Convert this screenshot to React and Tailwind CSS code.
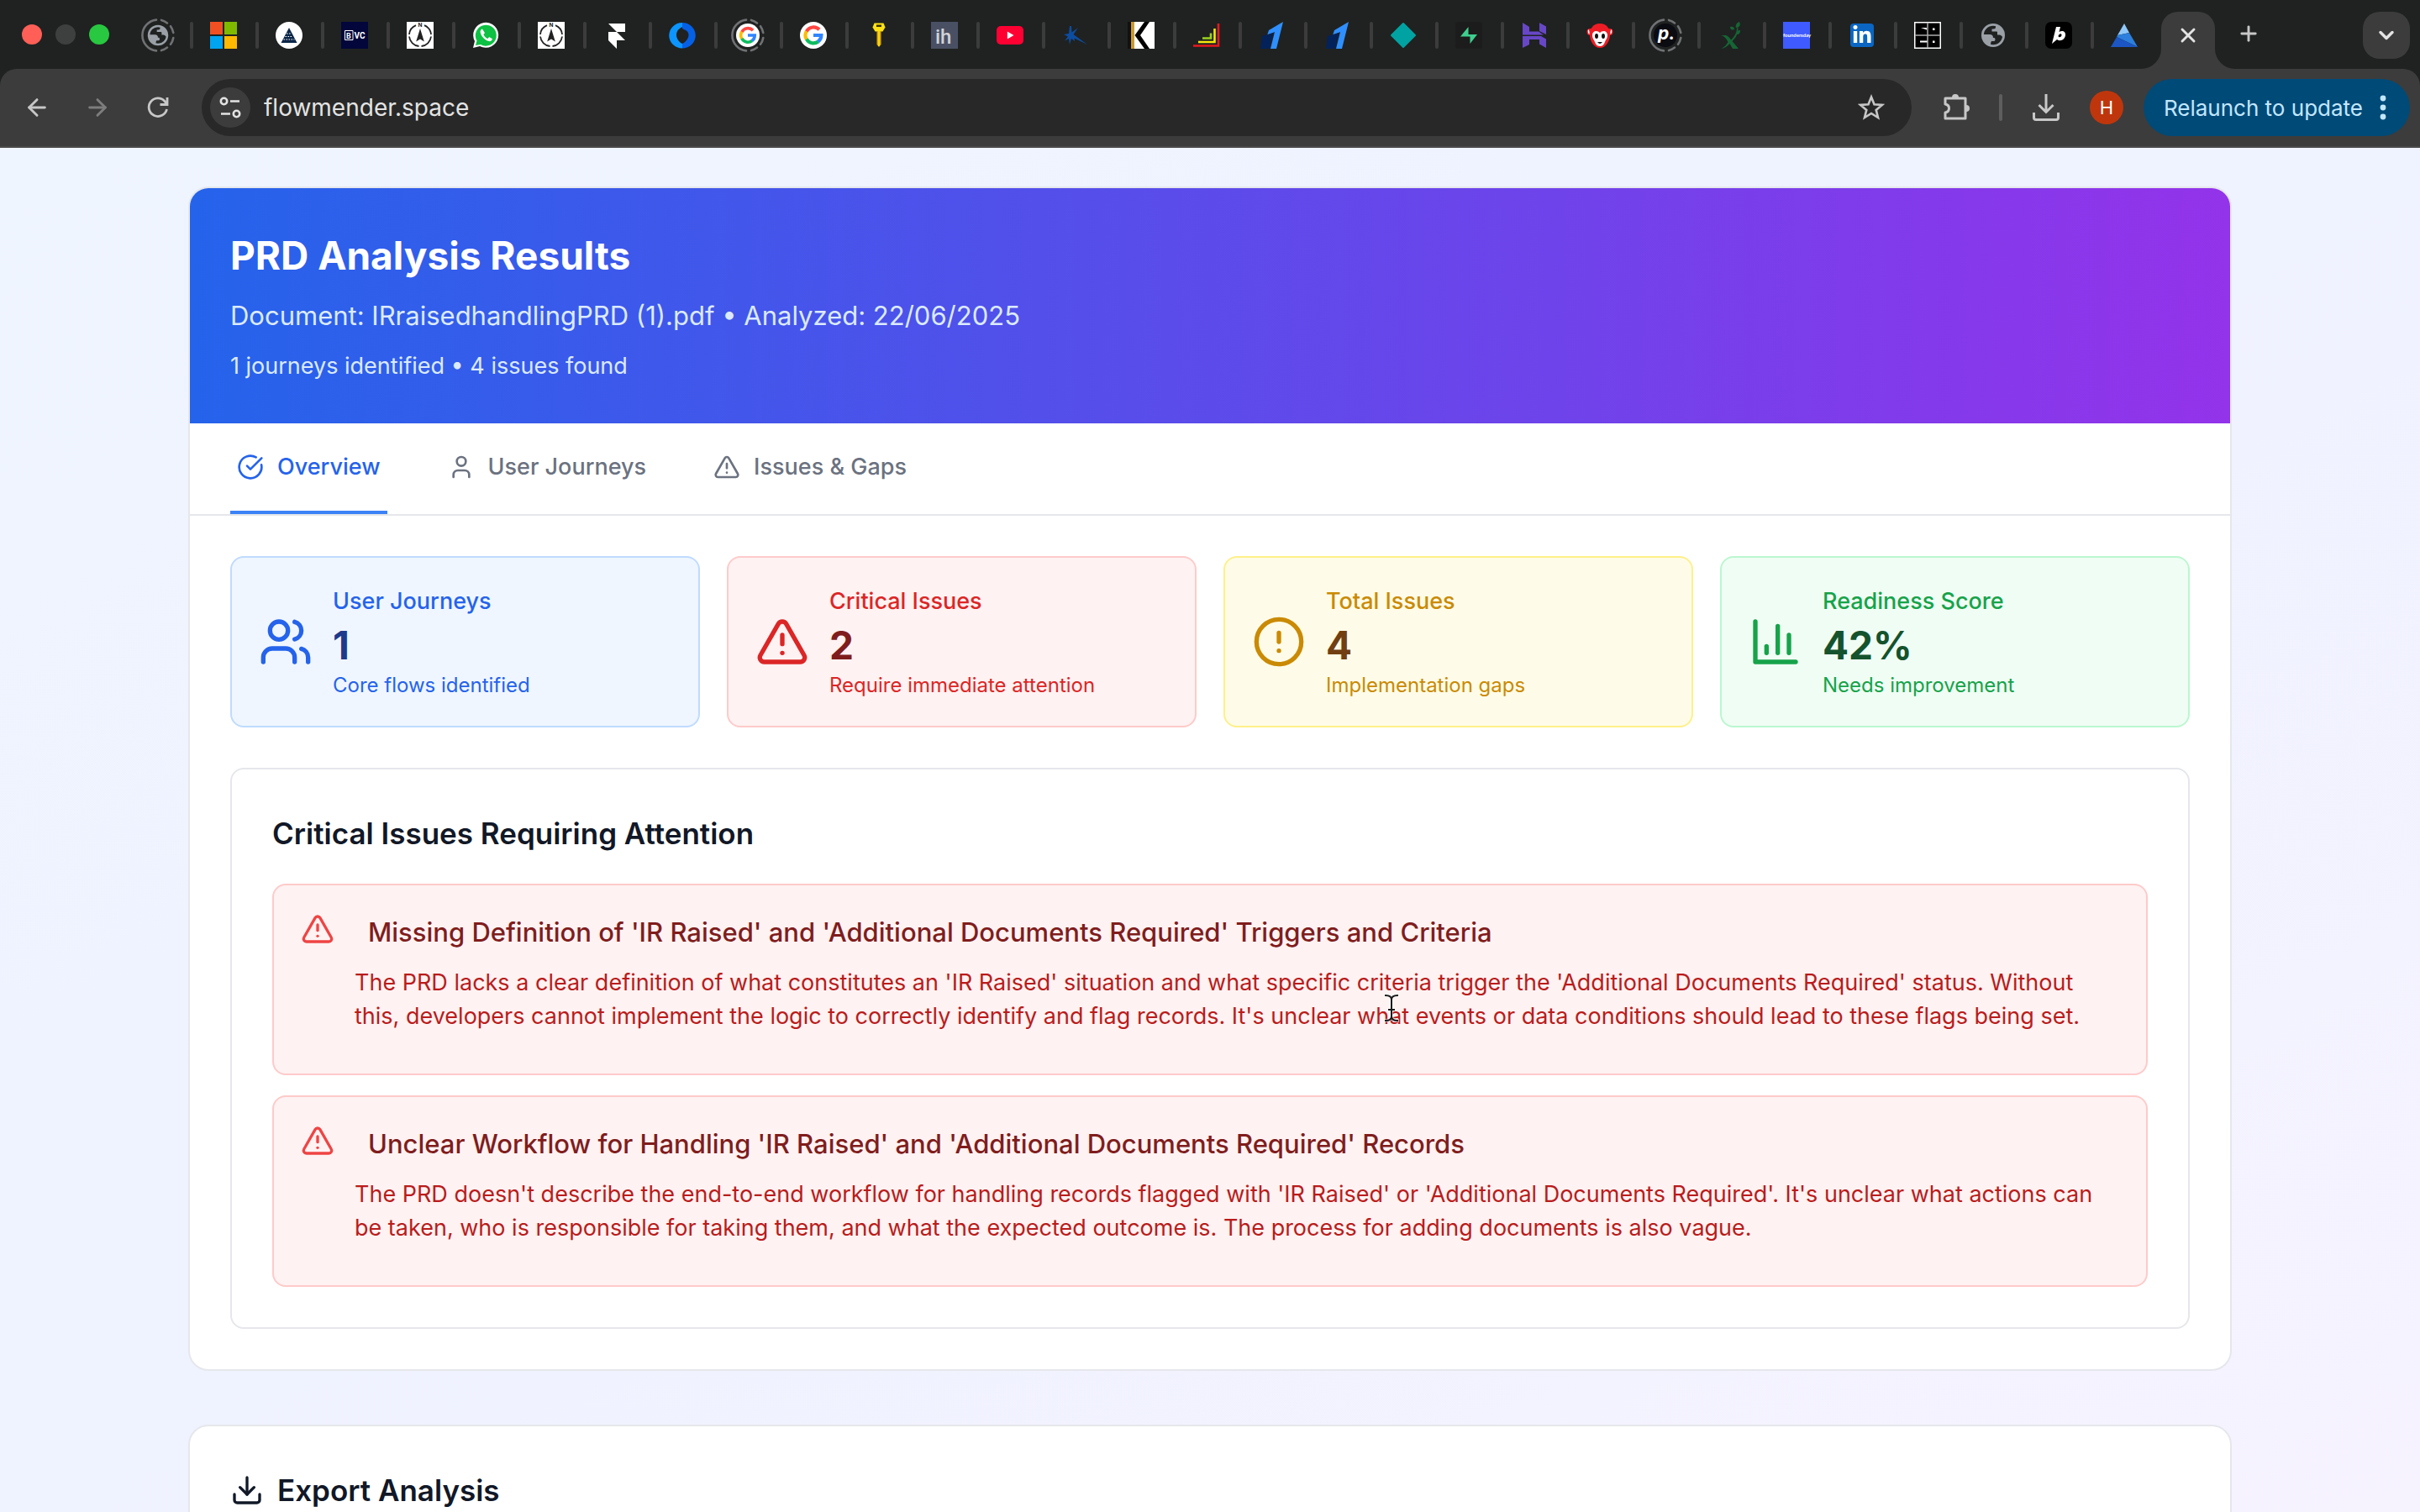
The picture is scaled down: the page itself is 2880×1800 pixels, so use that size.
import React from 'react';
import { FaLinkedinIn } from 'react-icons/fa6';
import {
  TriangleAlert,
  ArrowLeft,
  ArrowRight,
  ChevronDown,
  CircleAlert,
  CircleCheckBig,
  Download,
  Plus,
  User,
  Users,
  X,
} from 'lucide-react';

const TABS = [
  { id: 'overview', label: 'Overview', icon: CircleCheckBig },
  { id: 'journeys', label: 'User Journeys', icon: User },
  { id: 'issues', label: 'Issues & Gaps', icon: TriangleAlert },
];

const STATS = [
  {
    label: 'User Journeys',
    value: '1',
    note: 'Core flows identified',
    icon: Users,
    box: 'bg-[#eff6ff] border-[#bfdbfe]',
    text: 'text-[#2563eb]',
    number: 'text-[#1e3a8a]',
  },
  {
    label: 'Critical Issues',
    value: '2',
    note: 'Require immediate attention',
    icon: TriangleAlert,
    box: 'bg-[#fef2f2] border-[#fecaca]',
    text: 'text-[#dc2626]',
    number: 'text-[#7f1d1d]',
  },
  {
    label: 'Total Issues',
    value: '4',
    note: 'Implementation gaps',
    icon: CircleAlert,
    box: 'bg-[#fefce8] border-[#fef08a]',
    text: 'text-[#ca8a04]',
    number: 'text-[#713f12]',
  },
  {
    label: 'Readiness Score',
    value: '42%',
    note: 'Needs improvement',
    icon: BarChart,
    box: 'bg-[#f0fdf4] border-[#bbf7d0]',
    text: 'text-[#16a34a]',
    number: 'text-[#14532d]',
  },
];

const ISSUES = [
  {
    title: "Missing Definition of 'IR Raised' and 'Additional Documents Required' Triggers and Criteria",
    body: "The PRD lacks a clear definition of what constitutes an 'IR Raised' situation and what specific criteria trigger the 'Additional Documents Required' status. Without this, developers cannot implement the logic to correctly identify and flag records. It's unclear what events or data conditions should lead to these flags being set.",
  },
  {
    title: "Unclear Workflow for Handling 'IR Raised' and 'Additional Documents Required' Records",
    body: "The PRD doesn't describe the end-to-end workflow for handling records flagged with 'IR Raised' or 'Additional Documents Required'. It's unclear what actions can be taken, who is responsible for taking them, and what the expected outcome is. The process for adding documents is also vague.",
  },
];

function BarChart({ className }) {
  return (
    <svg viewBox="0 0 24 24" fill="none" stroke="currentColor" strokeWidth="2" strokeLinecap="round" strokeLinejoin="round" className={className}>
      <path d="M3 3v18h18" />
      <path d="M18 17V9" />
      <path d="M13 17V5" />
      <path d="M8 17v-3" />
    </svg>
  );
}

/* ---------- favicons, all drawn on a 32 grid ---------- */

function Fav({ children }) {
  return <svg viewBox="0 0 32 32" className="size-8 shrink-0 overflow-visible">{children}</svg>;
}

// broken ring shown around sleeping tabs
function Ring() {
  return (
    <g fill="none" stroke="#6f7173" strokeWidth="2.6" strokeLinecap="round">
      <path d="M14 -2.4 A18.5 18.5 0 0 0 14 34.4" />
      <path d="M20 -2.1 A18.5 18.5 0 0 1 27 1.4" />
      <path d="M31 5.2 A18.5 18.5 0 0 1 34.3 13" />
      <path d="M34.3 19 A18.5 18.5 0 0 1 31 26.8" />
      <path d="M27 30.6 A18.5 18.5 0 0 1 20 34.1" />
    </g>
  );
}

function GlobeShape() {
  return (
    <>
      <circle cx="16" cy="16" r="12.6" fill="#1f2221" stroke="#9aa0a6" strokeWidth="2.8" />
      <path d="M3 15h9q4 0 4 4h1.500q2 2 0 4h-3.500q-1 1-1 5Q5 26 3 17z" fill="#9aa0a6" />
      <path d="M19 3.500v2.500q0 2.500-2.500 2.500h-2v3h5.500q1 0 1 1v3h2.500q2 0 3 2l2.500-1Q29 7 19 3.500z" fill="#9aa0a6" />
    </>
  );
}

function Globe() {
  return <Fav><GlobeShape /></Fav>;
}

function GlobeRing() {
  return (
    <Fav>
      <Ring />
      <g transform="translate(2 2) scale(0.875)"><GlobeShape /></g>
    </Fav>
  );
}

function Microsoft() {
  return (
    <Fav>
      <path fill="#f25022" d="M0 0h15v15H0z" />
      <path fill="#7fba00" d="M17 0h15v15H17z" />
      <path fill="#00a4ef" d="M0 17h15v15H0z" />
      <path fill="#ffb900" d="M17 17h15v15H17z" />
    </Fav>
  );
}

function Pyramid() {
  return (
    <Fav>
      <circle cx="16" cy="16" r="16" fill="#fff" />
      <path d="M16 7l9.500 18h-19z" fill="#0b2547" />
      <path d="M13 14h6M11.500 17.500h9M9.500 21h13" stroke="#fff" strokeWidth="1.200" strokeDasharray="1.600 1.400" />
    </Fav>
  );
}

function Bvc() {
  return (
    <Fav>
      <path fill="#02063a" d="M0 0h32v32H0z" />
      <path d="M4.500 10.500h9.500v11H4.500z" fill="none" stroke="#fff" strokeWidth="1" />
      <text x="6" y="19.500" fontSize="9" fontWeight="700" fontFamily="Roboto, sans-serif" fill="#fff">B</text>
      <text x="15.500" y="19.500" fontSize="10" fontWeight="700" fontFamily="Roboto, sans-serif" fill="#fff">VC</text>
    </Fav>
  );
}

function Compass() {
  return (
    <Fav>
      <path fill="#fff" d="M0 0h32v32H0z" />
      <g fill="none" stroke="#222" strokeWidth="1.800">
        <path d="M11 4.200A13 13 0 0 0 3 15" />
        <path d="M21 4.200A13 13 0 0 1 29 15" />
        <path d="M3 17.500A13 13 0 0 0 14.500 29" />
        <path d="M29 17.500A13 13 0 0 1 17.500 29" />
      </g>
      <path d="M16 8l4.800 15.500L16 20.500l-4.800 3z" fill="#222" />
      <text x="13.500" y="6" fontSize="6.500" fontWeight="700" fontFamily="Inter, sans-serif" fill="#222">N</text>
    </Fav>
  );
}

function WhatsApp() {
  return (
    <Fav>
      <path d="M1 31l2-8A15 15 0 1 1 9 29z" fill="#fff" />
      <path d="M4 28l1.500-5.500A12.500 12.500 0 1 1 10 27z" fill="#0dc143" />
      <path d="M12 8.500c-1.500.3-2.800 2-2.300 4.300 1 4.700 5.500 9.300 10 10.300 2.500.4 4-1 4.200-2.800l-3.700-2.200-1.700 1.800c-2.400-.9-4.300-2.900-5.100-5l1.600-1.700z" fill="#fff" />
    </Fav>
  );
}

function Framer() {
  return <Fav><path d="M6 2h20v10H16zM6 12h10l10 10H16v10L6 22z" fill="#fff" /></Fav>;
}

function BlueRing() {
  return (
    <Fav>
      <path d="M16 1A15.500 15 0 0 0 16 31.500V26c-4-2-7-6-7-10.500S12 8 16 6z" fill="#0c95ff" />
      <path d="M16 1A15.500 15 0 0 1 16 31.500V26c4-2 7.500-6 7.500-10.500S20 10 16 8z" fill="#0560e6" />
    </Fav>
  );
}

function GoogleMark() {
  return (
    <>
      <circle cx="16" cy="16" r="16" fill="#fff" />
      <g fill="none" strokeWidth="4.200">
        <path d="M23 9.300A9.500 9.500 0 0 0 7.800 11.500" stroke="#ff4641" />
        <path d="M7.800 11.200A9.500 9.500 0 0 0 7.800 20.800" stroke="#fcbd00" />
        <path d="M7.800 20.500A9.500 9.500 0 0 0 21.800 23.500" stroke="#0ebc5f" />
        <path d="M16 16h9.400A9.500 9.500 0 0 1 21.600 23.600" stroke="#3186ff" />
      </g>
    </>
  );
}

function Google() {
  return <Fav><GoogleMark /></Fav>;
}

function GoogleRing() {
  return (
    <Fav>
      <Ring />
      <g transform="translate(2 2) scale(0.875)"><GoogleMark /></g>
    </Fav>
  );
}

function Key() {
  return (
    <Fav>
      <path d="M10.500 1.500h11l2 5-3 5H11.500l-3-5z" fill="#fce116" />
      <path d="M13.500 11h5v16L16 30l-2.500-3z" fill="#e0a800" />
      <path d="M16 11v18" stroke="#fce116" strokeWidth="1.600" />
      <path d="M13 3.500h6v2.500h-6z" fill="#3a3205" />
    </Fav>
  );
}

function IndieHackers() {
  return (
    <Fav>
      <path fill="#4a5064" d="M0 0h32v32H0z" />
      <text x="5" y="26" fontSize="24" fontFamily="Roboto, sans-serif" fontWeight="500" fill="#d0d3d6">ih</text>
    </Fav>
  );
}

function YouTube() {
  return (
    <Fav>
      <rect x="0" y="5" width="32" height="22" rx="5" fill="#ff0033" />
      <path d="M12.800 11.500L20.500 16l-7.700 4.500z" fill="#fff" />
    </Fav>
  );
}

function StarK() {
  return (
    <Fav>
      <path d="M9 5h2l.5 7.500L19 7l-5.500 8L30 27l-15.500-7.500L15 23l-4-3L9 27 8 20l-5 2.500 4-5L2 15l6-1z" fill="#0d4da1" />
    </Fav>
  );
}

function BlackK() {
  return (
    <Fav>
      <path fill="#fff" d="M0 0h32v32H0z" />
      <path d="M0 0h4v32H0z" fill="#111" />
      <path d="M4 0h4v32H4z" fill="#c99a2e" />
      <path d="M20 0h6l-11 16 11 16h-6L8.500 16z" fill="#000" />
    </Fav>
  );
}

function Stairs() {
  return (
    <Fav>
      <g fill="none" strokeWidth="2.600">
        <path d="M0 28.500h30V2" stroke="#e8191c" />
        <path d="M6 24h19.500V8" stroke="#f6e80c" />
        <path d="M11 19.500h10v-6" stroke="#9bd21c" />
      </g>
    </Fav>
  );
}

function BlueOne() {
  return (
    <Fav>
      <path d="M29 0L21 32H14L19 12l-9 4 2-6z" fill="#2f8fff" />
      <path d="M4 17l13-4-4 19H2z" fill="#04225a" />
    </Fav>
  );
}

function Diamond() {
  return <Fav><path d="M16 2l14 14-14 14L2 16z" fill="#00a3a1" stroke="#00a3a1" strokeWidth="2" strokeLinejoin="round" /></Fav>;
}

function Supabase() {
  return (
    <Fav>
      <rect width="32" height="32" rx="4" fill="#1c1c1c" />
      <path d="M15.500 6v9H26L17.500 26v-8.500H6z" fill="#3ecf8e" />
    </Fav>
  );
}

function Hostinger() {
  return (
    <Fav>
      <path d="M2 1l8 5v5.500h11l6 4H2zM22 1l8 4.500v9.500l-8-4zM2 31V17h22l6 3.500V31l-8-4.500V21H10v6z" fill="#6747c7" />
    </Fav>
  );
}

function Monkey() {
  return (
    <Fav>
      <circle cx="4.500" cy="12" r="4" fill="#ee1d25" />
      <circle cx="27.500" cy="12" r="4" fill="#ee1d25" />
      <path d="M16 2c8 0 12 6 12 13 0 8-5 16-12 16S4 23 4 15C4 8 8 2 16 2z" fill="#ee1d25" />
      <path d="M16 13c3-3.500 9-2.500 9 3 0 4-2 5-3 8s-3 5-6 5-5-2-6-5-3-4-3-8c0-5.500 6-6.500 9-3z" fill="#fff" />
      <path d="M2 9q2 1 1.500 6Q1 13 2 9zM30 9q-2 1-1.500 6 2.500-2 1.500-6z" fill="#fff" />
      <ellipse cx="12" cy="17" rx="2" ry="3" fill="#111" />
      <ellipse cx="20" cy="17" rx="2" ry="3" fill="#111" />
      <path d="M13 24q3 4 6 0z" fill="#111" />
    </Fav>
  );
}

function PDot() {
  return (
    <Fav>
      <Ring />
      <circle cx="16" cy="16" r="14" fill="#0b0b12" />
      <text x="7" y="21" fontSize="21" fontWeight="700" fontStyle="italic" fontFamily="Inter, sans-serif" fill="#fff">p.</text>
    </Fav>
  );
}

function Plant() {
  return (
    <Fav>
      <path d="M4 16h6c3 1 4.500 3 6 5.500 5-5 7-9 7-14.500l1.500.5c0 7-3 12-7 15.500l7.500 9h-7l-3.500-6c-3 3-6 5.500-10 6 4-2 6-5 8-8-2-4-4-7-8.500-8z" fill="#166534" />
      <path d="M26 0c2 4 0 7-4 7-1-3 1-6 4-7zM15 6c3-1 5 0 5 3-3 1-5 0-5-3zM27 10c0 3-1 5-4 5 0-3 1-5 4-5z" fill="#166534" />
    </Fav>
  );
}

function Foundersday() {
  return (
    <Fav>
      <path fill="#3f5bff" d="M0 0h32v32H0z" />
      <text x="0" y="18" fontSize="6" fontWeight="700" fontFamily="Lato, sans-serif" fill="#fff">foundersday</text>
    </Fav>
  );
}

function LinkedIn() {
  return (
    <span className="flex size-8 shrink-0 items-center justify-center">
      <span className="flex size-7 items-center justify-center rounded-sm bg-[#0a66c2]">
        <FaLinkedinIn className="size-6 text-white" />
      </span>
    </span>
  );
}

function GridBox() {
  return (
    <Fav>
      <path d="M.75.75h30.500v30.500H.75z" fill="#000" stroke="#fff" strokeWidth="1.500" />
      <path d="M16 1v30M1 16h30" stroke="#aaa" strokeWidth="1.500" />
      <path d="M8 7h7v2.500zM22 7.500h2.500V10H22zM7 22.500h8.500V24.500H7zM22 22.500h2.500v2.500H22z" fill="#fff" />
    </Fav>
  );
}

function BoldB() {
  return (
    <Fav>
      <rect width="32" height="32" rx="7" fill="#000" />
      <path d="M13 6h5l-1.500 6c4-2.500 8-.5 7.500 4-.5 5-6 8-10 5l-6 5z M15.500 17c.5 2 3.500 1.500 4-1 .3-2.500-3-2.500-4 1z" fill="#fff" fillRule="evenodd" />
    </Fav>
  );
}

function Peak() {
  return (
    <Fav>
      <path d="M16 2L8 16l14-3z" fill="#8fc8fb" />
      <path d="M22 13L8 16l-1 2 25 12z" fill="#2c7fdc" />
      <path d="M7 18L0 30h32z" fill="#1b56c4" />
    </Fav>
  );
}

const FAVICONS = [
  GlobeRing, Microsoft, Pyramid, Bvc, Compass, WhatsApp, Compass, Framer, BlueRing, GoogleRing,
  Google, Key, IndieHackers, YouTube, StarK, BlackK, Stairs, BlueOne, BlueOne, Diamond,
  Supabase, Hostinger, Monkey, PDot, Plant, Foundersday, LinkedIn, GridBox, Globe, BoldB, Peak,
];

function TabStrip() {
  return (
    <div className="flex h-[82px] items-end bg-[#1f2221]">
      <div className="flex h-full w-[152px] shrink-0 items-center gap-4 pl-[26px]">
        <button aria-label="Close window" className="size-6 rounded-full bg-[#ff5f57]" />
        <button aria-label="Minimize window" className="size-6 rounded-full bg-[#3d403f]" />
        <button aria-label="Zoom window" className="size-6 rounded-full bg-[#28c840]" />
      </div>
      {FAVICONS.map((Icon, i) => (
        <div key={i} className="flex h-full shrink-0 items-center pt-0.5 pl-5">
          <Icon />
          {i < FAVICONS.length - 1 && <span className="ml-[22px] h-8 w-1 rounded-full bg-[#3c3c3c]" />}
        </div>
      ))}
      <div className="relative ml-7 flex h-[68px] w-16 shrink-0 items-center justify-center rounded-t-[20px] bg-[#3c3c3c] pb-3">
        <svg viewBox="0 0 24 24" className="absolute bottom-0 -left-6 size-6" fill="#3c3c3c"><path d="M24 0v24H0A24 24 0 0 0 24 0z" /></svg>
        <svg viewBox="0 0 24 24" className="absolute right-[-24px] bottom-0 size-6" fill="#3c3c3c"><path d="M0 0v24h24A24 24 0 0 1 0 0z" /></svg>
        <button aria-label="Close tab"><X className="size-7 text-[#e3e3e3]" strokeWidth={2.5} /></button>
      </div>
      <button aria-label="New tab" className="mb-7 ml-[26px]"><Plus className="size-7 text-[#c7c7c7]" strokeWidth={2.5} /></button>
      <button aria-label="Search tabs" className="mr-3 mb-3 ml-auto flex size-14 items-center justify-center rounded-[20px] bg-[#3c3c3c]">
        <ChevronDown className="size-7 text-[#e3e3e3]" strokeWidth={3} />
      </button>
    </div>
  );
}

function Toolbar() {
  return (
    <div className="bg-[#1f2221]">
      <div className="flex h-[94px] items-center rounded-t-[20px] border-b-2 border-[#4a4a4a] bg-[#3c3c3c] pr-3 pl-7">
        <button aria-label="Back"><ArrowLeft className="size-8 text-[#c7c7c7]" strokeWidth={2.2} /></button>
        <button aria-label="Forward" className="ml-10"><ArrowRight className="size-8 text-[#7d7d7d]" strokeWidth={2.2} /></button>
        <button aria-label="Reload" className="ml-10">
          <svg viewBox="0 0 32 32" className="size-8" fill="none" stroke="#c7c7c7" strokeWidth="2.800">
            <path d="M26.500 18A10.800 10.800 0 1 1 24 8.500l2.500 3" />
            <path d="M27 4v8.500h-8.500" />
          </svg>
        </button>
        <div className="ml-9 flex h-[68px] flex-1 items-center rounded-full bg-[#282828] pr-8 pl-[10px]">
          <button aria-label="Site information" className="flex size-12 items-center justify-center rounded-full bg-[#3c3c3c]">
            <svg viewBox="0 0 28 28" className="size-7" fill="none" stroke="#e3e3e3" strokeWidth="2.600">
              <circle cx="6.500" cy="6.500" r="3.700" />
              <path d="M14 6.500h11M3 21.500h11" />
              <circle cx="21.500" cy="21.500" r="3.700" />
            </svg>
          </button>
          <input
            type="text"
            aria-label="Address"
            defaultValue="flowmender.space"
            className="ml-4 min-w-0 flex-1 bg-transparent text-[28px] leading-10 text-[#e3e3e3] outline-none"
          />
          <button aria-label="Bookmark">
            <svg viewBox="0 0 32 32" className="size-8" fill="none" stroke="#c7c7c7" strokeWidth="2.600">
              <path d="M16 3.500l3.500 8.700 9.400.7-7.200 6 2.300 9.100-8-5-8 5 2.300-9.100-7.200-6 9.400-.7z" />
            </svg>
          </button>
        </div>
        <button aria-label="Extensions" className="ml-9">
          <svg viewBox="0 0 36 36" className="size-9" fill="none" stroke="#c7c7c7" strokeWidth="3" strokeLinejoin="round">
            <path d="M4 7h24v24H4v-7c6-1 6-9 0-10z" />
            <path d="M12 6a4 4 0 0 1 8 0zM29 15a4 4 0 0 1 0 8z" fill="#c7c7c7" stroke="none" />
          </svg>
        </button>
        <span className="ml-8 h-8 w-1 rounded-full bg-[#5e5e5e]" />
        <button aria-label="Downloads" className="ml-[34px]">
          <svg viewBox="0 0 36 36" className="size-9" fill="none" stroke="#c7c7c7" strokeWidth="3">
            <path d="M18 2v21M9.500 15l8.500 8.500 8.500-8.500" />
            <path d="M3.500 24v6q0 2.500 2.500 2.500h24q2.500 0 2.500-2.500v-6" />
          </svg>
        </button>
        <button aria-label="Profile" className="ml-[34px] flex size-10 items-center justify-center rounded-full bg-[#bf360c] text-[22px] text-white">H</button>
        <button className="ml-6 flex h-[68px] items-center rounded-full bg-[#004a77] pr-7 pl-6 text-[26px] text-[#c2e7ff]">
          <span>Relaunch to update</span>
          <svg viewBox="0 0 8 32" className="ml-5 h-8 w-2" fill="#c2e7ff">
            <circle cx="4" cy="5" r="3.400" /><circle cx="4" cy="16" r="3.400" /><circle cx="4" cy="27" r="3.400" />
          </svg>
        </button>
      </div>
    </div>
  );
}

function StatCard({ stat }) {
  const Icon = stat.icon;
  return (
    <div className={`flex items-center gap-6 rounded-2xl border-2 p-8 ${stat.box}`}>
      <Icon className={`size-16 shrink-0 ${stat.text}`} />
      <div>
        <p className={`text-[27px] leading-10 font-medium ${stat.text}`}>{stat.label}</p>
        <p className={`text-[46px] leading-16 font-bold ${stat.number}`}>{stat.value}</p>
        <p className={`text-[24px] leading-8 ${stat.text}`}>{stat.note}</p>
      </div>
    </div>
  );
}

function IssueCard({ issue }) {
  return (
    <div className="flex items-start gap-6 rounded-2xl border-2 border-[#fecaca] bg-[#fef2f2] p-8 pb-12">
      <TriangleAlert className="size-10 shrink-0 text-[#ef4444]" />
      <div className="min-w-0 flex-1">
        <h4 className="pl-4 text-[31px] leading-12 font-medium text-[#7f1d1d]">{issue.title}</h4>
        <p className="mt-4 text-[27px] leading-10 text-[#b91c1c]">{issue.body}</p>
      </div>
    </div>
  );
}

function TextCursor() {
  return (
    <svg viewBox="0 0 20 36" className="absolute top-[1182px] left-[1646px] h-9 w-5" fill="none" strokeLinecap="square">
      <path d="M3 3q7 0 7 5v20q0 5-7 5M17 3q-7 0-7 5M10 28q0 5 7 5M7 20h6" stroke="#fff" strokeWidth="4" opacity="0.6" />
      <path d="M3 3q7 0 7 5v20q0 5-7 5M17 3q-7 0-7 5M10 28q0 5 7 5M7 20h6" stroke="#1a1a1a" strokeWidth="2" />
    </svg>
  );
}

export default function App() {
  const [active, setActive] = React.useState('overview');

  return (
    <div className="relative flex h-screen flex-col overflow-hidden font-[Inter,sans-serif]">
      <TabStrip />
      <Toolbar />

      <main className="flex-1 overflow-hidden bg-linear-to-br/srgb from-[#eff5ff] via-[#eff2ff] to-[#f6f3ff] px-56 pt-[46px]">
        <section className="overflow-hidden rounded-3xl border-2 border-[#e5e7eb] bg-white">
          <header className="bg-linear-to-r/srgb from-[#2563eb] to-[#9333ea] p-12">
            <h1 className="text-[46px] leading-16 font-bold text-white">PRD Analysis Results</h1>
            <p className="mt-4 text-[31px] leading-12 text-[#dbeafe]">Document: IRraisedhandlingPRD (1).pdf • Analyzed: 22/06/2025</p>
            <p className="mt-4 text-[27px] leading-10 text-[#dbeafe]">1 journeys identified • 4 issues found</p>
          </header>

          <nav className="flex gap-16 border-b-2 border-[#e5e7eb] px-12">
            {TABS.map(({ id, label, icon: Icon }) => (
              <button
                key={id}
                onClick={() => setActive(id)}
                className={`flex items-center gap-4 border-b-4 px-2 py-8 text-[27px] leading-10 font-medium ${
                  active === id ? 'border-[#3b82f6] text-[#2563eb]' : 'border-transparent text-[#6b7280]'
                }`}
              >
                <Icon className="size-8" />
                {label}
              </button>
            ))}
          </nav>

          <div className="p-12">
            <div className="grid grid-cols-4 gap-8">
              {STATS.map(stat => <StatCard key={stat.label} stat={stat} />)}
            </div>

            <div className="mt-12 rounded-2xl border-2 border-[#e5e7eb] p-12">
              <h3 className="text-[35px] leading-14 font-semibold text-[#111827]">Critical Issues Requiring Attention</h3>
              <div className="mt-8 space-y-6">
                {ISSUES.map(issue => <IssueCard key={issue.title} issue={issue} />)}
              </div>
            </div>
          </div>
        </section>

        <section className="mt-16 rounded-3xl border-2 border-[#e5e7eb] bg-white p-12">
          <h3 className="flex items-center gap-4 text-[35px] leading-14 font-semibold text-[#111827]">
            <Download className="size-10" />
            Export Analysis
          </h3>
        </section>
      </main>

      <TextCursor />
    </div>
  );
}
